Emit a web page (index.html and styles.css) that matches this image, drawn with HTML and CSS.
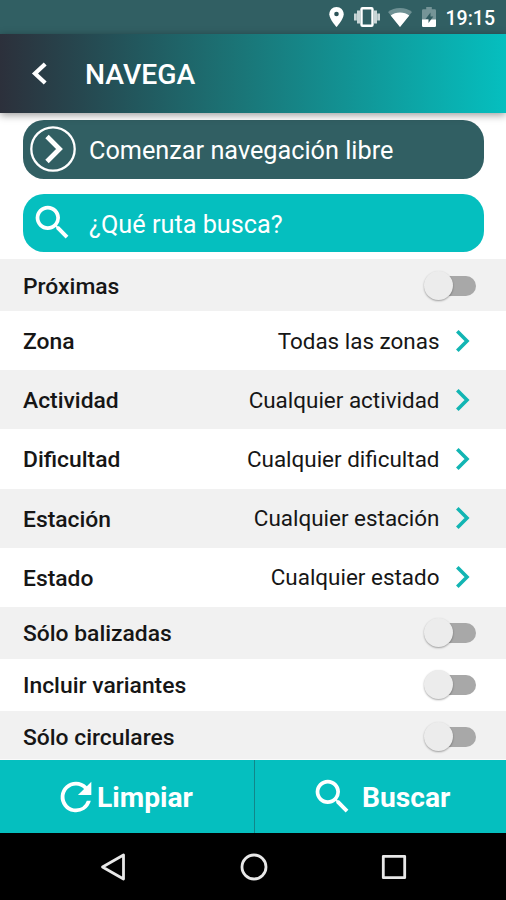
FILE: index.html
```html
<!DOCTYPE html>
<html lang="es">
<head>
  <meta charset="UTF-8" />
  <meta name="viewport" content="width=device-width, initial-scale=1.0" />
  <title>Navega</title>
  <link rel="stylesheet" href="styles.css">
</head>
<body>

  <div class="status-bar">
    <svg class="status-pin" width="15" height="20" viewBox="0 0 15 20">
      <path fill="#fff" d="M7.500 0C3.400 0 .3 3.200.3 7.200c0 5 7.200 12.800 7.200 12.800s7.200-7.800 7.200-12.800C14.700 3.200 11.600 0 7.500 0z"/>
      <circle cx="7.500" cy="7" r="2.300" fill="#2d5358"/>
    </svg>
    <svg class="status-vibrate" width="26" height="20" viewBox="0 0 26 20">
      <rect x="7.500" y="1.300" width="11" height="17.400" rx="1" fill="none" stroke="#fff" stroke-width="2.400"/>
      <path stroke="#c9d5d6" stroke-width="3" d="M4.500 3.500v13M21.500 3.500v13M1.300 6.500v7M24.700 6.500v7"/>
    </svg>
    <svg class="status-wifi" width="24" height="19" viewBox="0 0 24 19">
      <path fill="#6f9194" d="M12 0C7.300 0 3.200 1.500 0 4l12 15L24 4C20.800 1.500 16.700 0 12 0z"/>
      <path fill="#fff" d="M12 4.500c-3.800 0-6.800 1.200-9.300 3L12 19l9.300-11.500c-2.500-1.800-5.500-3-9.300-3z"/>
    </svg>
    <svg class="status-battery" width="14" height="20" viewBox="0 0 14 20">
      <path fill="#759497" d="M0 3.500q0-1.200 1.200-1.200h3V0h5.600v2.300h3q1.200 0 1.200 1.200V13H0z"/>
      <path fill="#fff" d="M0 12.500h14v6.300q0 1.200-1.200 1.200H1.200Q0 20 0 18.800z"/>
      <path fill="#315c61" d="M8.500 5.500l-5 6.500h3v4l4.800-6.500h-2.800z"/>
    </svg>
    <span class="clock">19:15</span>
  </div>

  <header class="top-bar">
    <svg class="back" width="16" height="24" viewBox="0 0 16 24">
      <path d="M14.200 2L4 11.500 14.200 21"/>
    </svg>
    <h1>NAVEGA</h1>
  </header>

  <main>
    <div class="actions">
      <button class="pill pill-dark">
        <svg width="46" height="46" viewBox="0 0 46 46" fill="none" stroke="#fff">
          <circle cx="23" cy="23" r="21.700" stroke-width="2.300"/>
          <path stroke-width="4.800" d="M17 10.500L29.500 23 17 35.500"/>
        </svg>
        <span>Comenzar navegación libre</span>
      </button>
      <button class="pill pill-light">
        <svg width="45" height="45" viewBox="0 0 24 24" fill="#fff">
          <path d="M15.500 14h-.79l-.28-.27A6.471 6.471 0 0 0 16 9.500 6.500 6.500 0 1 0 9.500 16c1.610 0 3.090-.59 4.230-1.570l.27.28v.79l5 4.990L20.490 19l-4.990-5zm-6 0C7.010 14 5 11.990 5 9.500S7.010 5 9.500 5 14 7.010 14 9.500 11.990 14 9.500 14z"/>
        </svg>
        <span>¿Qué ruta busca?</span>
      </button>
    </div>

    <div class="filters">
      <div class="row row-switch">
        <span class="label">Próximas</span>
        <span class="switch"></span>
      </div>
      <div class="row">
        <span class="label">Zona</span>
        <span class="value">Todas las zonas</span>
        <svg class="chevron" width="14" height="22" viewBox="0 0 14 22"><path d="M1.300 1.300L11 11l-9.700 9.700"/></svg>
      </div>
      <div class="row">
        <span class="label">Actividad</span>
        <span class="value">Cualquier actividad</span>
        <svg class="chevron" width="14" height="22" viewBox="0 0 14 22"><path d="M1.300 1.300L11 11l-9.700 9.700"/></svg>
      </div>
      <div class="row">
        <span class="label">Dificultad</span>
        <span class="value">Cualquier dificultad</span>
        <svg class="chevron" width="14" height="22" viewBox="0 0 14 22"><path d="M1.300 1.300L11 11l-9.700 9.700"/></svg>
      </div>
      <div class="row">
        <span class="label">Estación</span>
        <span class="value">Cualquier estación</span>
        <svg class="chevron" width="14" height="22" viewBox="0 0 14 22"><path d="M1.300 1.300L11 11l-9.700 9.700"/></svg>
      </div>
      <div class="row">
        <span class="label">Estado</span>
        <span class="value">Cualquier estado</span>
        <svg class="chevron" width="14" height="22" viewBox="0 0 14 22"><path d="M1.300 1.300L11 11l-9.700 9.700"/></svg>
      </div>
      <div class="row row-switch">
        <span class="label">Sólo balizadas</span>
        <span class="switch"></span>
      </div>
      <div class="row row-switch">
        <span class="label">Incluir variantes</span>
        <span class="switch"></span>
      </div>
      <div class="row row-switch">
        <span class="label">Sólo circulares</span>
        <span class="switch"></span>
      </div>
    </div>
  </main>

  <footer class="bottom-bar">
    <button class="clear-btn">
      <svg width="46" height="46" viewBox="0 0 24 24" fill="#fff">
        <path d="M17.650 6.350A7.958 7.958 0 0 0 12 4a8 8 0 1 0 7.730 10h-2.080A5.990 5.990 0 0 1 12 18a6 6 0 1 1 0-12c1.660 0 3.140.69 4.220 1.780L13 11h7V4l-2.350 2.350z"/>
      </svg>
      <span>Limpiar</span>
    </button>
    <button class="search-btn">
      <svg width="45" height="45" viewBox="0 0 24 24" fill="#fff">
        <path d="M15.500 14h-.79l-.28-.27A6.471 6.471 0 0 0 16 9.500 6.500 6.500 0 1 0 9.500 16c1.610 0 3.090-.59 4.230-1.570l.27.28v.79l5 4.990L20.490 19l-4.990-5zm-6 0C7.010 14 5 11.990 5 9.500S7.010 5 9.500 5 14 7.010 14 9.500 11.990 14 9.500 14z"/>
      </svg>
      <span>Buscar</span>
    </button>
  </footer>

  <nav class="android-nav">
    <svg width="26" height="28" viewBox="0 0 26 28"><path d="M23.500 2v24L2.500 14z"/></svg>
    <svg width="28" height="28" viewBox="0 0 28 28"><circle cx="14" cy="14" r="12"/></svg>
    <svg width="26" height="26" viewBox="0 0 26 26"><rect x="2.300" y="2.300" width="21.400" height="21.400"/></svg>
  </nav>

</body>
</html>
```
FILE: styles.css
```css
* {
  box-sizing: border-box;
  margin: 0;
  padding: 0;
}

body {
  display: flex;
  flex-direction: column;
  height: 900px;
  overflow: hidden;
  font-family: Roboto, "Liberation Sans", sans-serif;
  background: #fff;
  color: #161616;
}

svg {
  display: block;
  flex: none;
}

span,
h1 {
  white-space: nowrap;
}

button {
  border: none;
  font-family: inherit;
  color: #fff;
  cursor: pointer;
}

.status-bar {
  flex: none;
  display: flex;
  align-items: center;
  height: 34px;
  padding: 0 10px 0 328.500px;
  background: #315f63;
  color: #fff;
}

.status-vibrate {
  margin-left: 10px;
}

.status-wifi {
  margin-left: 8px;
}

.status-battery {
  margin-left: 10px;
}

.clock {
  margin-left: 10px;
  font-size: 19.500px;
  font-weight: 500;
  line-height: 34px;
  padding-top: 3px;
}

.top-bar {
  position: relative;
  flex: none;
  display: flex;
  align-items: center;
  height: 79px;
  padding: 0 0 0 31px;
  background: linear-gradient(to right, #2c303b, #1b7375 46%, #05bfbf);
  box-shadow: 0 2px 8px rgba(0, 0, 0, 0.4);
  color: #fff;
}

.back {
  fill: none;
  stroke: #fff;
  stroke-width: 4.2;
}

.top-bar h1 {
  margin-left: 38px;
  padding-top: 1px;
  font-size: 28.300px;
  font-weight: 500;
}

main {
  flex: none;
  height: 647px;
  overflow: hidden;
  border-bottom: 1px solid #fafafa;
}

.actions {
  display: flex;
  flex-direction: column;
  gap: 15px;
  padding: 7px 22px 7px 23px;
}

.pill {
  display: flex;
  align-items: center;
  height: 58.500px;
  border-radius: 21px;
  font-size: 25.250px;
  text-align: left;
}

.pill span {
  padding-top: 3px;
}

.pill-dark {
  padding-left: 7px;
  background: #315f63;
}

.pill-dark span {
  margin-left: 13px;
}

.pill-light {
  padding-left: 7px;
  background: #05bfbf;
}

.pill-light span {
  margin-left: 14px;
}

.row {
  display: flex;
  align-items: center;
  height: 59.200px;
  padding: 0 36.500px 0 23px;
  font-size: 22.850px;
}

.row:nth-child(odd) {
  background: #f1f1f1;
}

.row-switch {
  height: 52px;
  padding-right: 30px;
}

.label {
  padding-top: 2px;
  font-weight: 500;
}

.value {
  margin-left: auto;
  font-size: 22.450px;
}

.chevron {
  margin-left: 16px;
  fill: none;
  stroke: #12b5b3;
  stroke-width: 3.600;
}

.switch {
  position: relative;
  width: 46px;
  height: 20px;
  margin: 1px 0 0 auto;
  border-radius: 10px;
  background: #a8a8a8;
}

.switch::before {
  content: "";
  position: absolute;
  top: -5px;
  left: -6px;
  width: 29px;
  height: 29px;
  border-radius: 50%;
  background: #ececec;
  box-shadow: 0 1px 2px rgba(0, 0, 0, 0.35);
}

.bottom-bar {
  flex: none;
  display: flex;
  height: 73px;
}

.bottom-bar button {
  display: flex;
  align-items: center;
  background: #05bfbf;
  font-size: 28.200px;
  font-weight: 700;
}

.bottom-bar span {
  padding-top: 2px;
}

.clear-btn {
  width: 255px;
  padding-left: 53px;
}

.bottom-bar .clear-btn {
  border-right: 1px solid #11868a;
}

.clear-btn span {
  margin-left: -2px;
}

.search-btn {
  flex: 1;
  padding-left: 55px;
}

.search-btn span {
  margin-left: 7px;
}

.android-nav {
  flex: 1;
  display: flex;
  align-items: center;
  gap: 113.500px;
  padding-left: 100px;
  background: #000;
}

.android-nav svg {
  fill: none;
  stroke: #e8e8e8;
  stroke-width: 2.800;
  stroke-linejoin: round;
}
```
